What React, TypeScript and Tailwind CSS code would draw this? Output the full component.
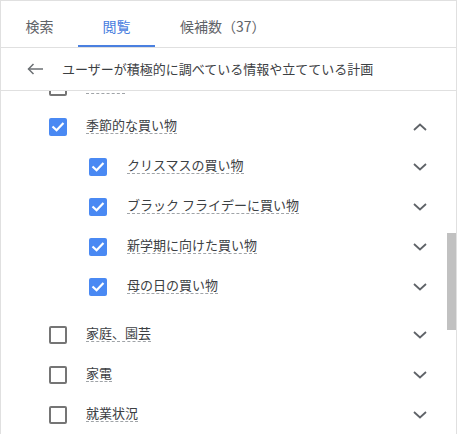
import React from "react";

function Checkbox({ checked }: { checked: boolean }) {
  if (checked) {
    return (
      <div className="w-[18px] h-[18px] rounded-[2px] bg-[#4a89f3] flex items-center justify-center shrink-0">
        <svg width="14" height="14" viewBox="0 0 14 14">
          <polyline points="2.3,7.2 5.6,10.3 11.7,3.9" fill="none" stroke="#ffffff" strokeWidth="2.2" strokeLinecap="square" />
        </svg>
      </div>
    );
  }
  return <div className="w-[18px] h-[18px] rounded-[2px] border-2 border-[#757575] shrink-0" />;
}

function Chevron({ up }: { up?: boolean }) {
  return (
    <svg width="14" height="8" viewBox="0 0 14 8" className="shrink-0">
      <polyline
        points={up ? "1,7 7,1.5 13,7" : "1,1 7,6.5 13,1"}
        fill="none"
        stroke="#5f6368"
        strokeWidth="1.8"
      />
    </svg>
  );
}

function Row({ label, checked, child, up }: { label: string; checked: boolean; child?: boolean; up?: boolean }) {
  return (
    <div className={"h-[40px] flex items-center " + (child ? "pl-[88px]" : "pl-[48px]")}>
      <Checkbox checked={checked} />
      <span className={"leading-[15px] pb-[1px] mb-[4px] border-b border-dashed border-[#a0a4a8] text-[13px] text-[#3c4043] " + (child ? "ml-[20px]" : "ml-[19px]")}>
        {label}
      </span>
      <div className="ml-auto mr-[29px] flex items-center">
        <Chevron up={up} />
      </div>
    </div>
  );
}

export default function App() {
  return (
    <div className="w-[458px] h-[434px] bg-white overflow-hidden font-['Noto_Sans_CJK_JP','Noto_Sans',sans-serif]">
      <div className="w-[457px] h-[434px] border-l border-t border-r border-[#e0e0e0] flex flex-col">
        <div className="h-[47px] shrink-0 flex border-b border-[#e0e0e0]">
          <div className="w-[77px] flex items-center justify-center pt-[5px] text-[14px] text-[#5f6368]">検索</div>
          <div className="w-[77px] relative flex items-center justify-center pt-[5px] text-[14px] text-[#4a80e0]">
            閲覧
            <div className="absolute left-0 right-0 bottom-0 h-[2px] bg-[#4a80e0]" />
          </div>
          <div className="flex items-center pl-[25px] pt-[5px] text-[14px] text-[#5f6368]">候補数（37）</div>
        </div>
        <div className="h-[43px] shrink-0 flex items-center pl-[26px] border-b border-[#e0e0e0]">
          <svg width="16" height="12" viewBox="0 0 16 12" className="shrink-0">
            <line x1="1.5" y1="6" x2="16" y2="6" stroke="#6b6f73" strokeWidth="1.5" />
            <polyline points="6.5,1 1.5,6 6.5,11" fill="none" stroke="#6b6f73" strokeWidth="1.5" />
          </svg>
          <span className="ml-[19px] text-[13px] text-[#3c4043]">ユーザーが積極的に調べている情報や立てている計画</span>
        </div>
        <div className="flex-1 relative overflow-hidden">
          <div className="mt-[-24px]">
            <div className="h-[40px] flex items-center pl-[48px]">
              <Checkbox checked={false} />
              <span className="ml-[19px] w-[39px] h-[17px] mb-[4px] border-b border-dashed border-[#a0a4a8]" />
            </div>
            <Row label="季節的な買い物" checked={true} up />
            <Row label="クリスマスの買い物" checked={true} child />
            <Row label="ブラック フライデーに買い物" checked={true} child />
            <Row label="新学期に向けた買い物" checked={true} child />
            <Row label="母の日の買い物" checked={true} child />
            <div className="pt-[8px]">
              <Row label="家庭、園芸" checked={false} />
              <Row label="家電" checked={false} />
              <Row label="就業状況" checked={false} />
            </div>
          </div>
          <div className="absolute right-0 top-[142px] w-[9px] h-[97px] bg-[#c1c1c1]" />
        </div>
      </div>
    </div>
  );
}
